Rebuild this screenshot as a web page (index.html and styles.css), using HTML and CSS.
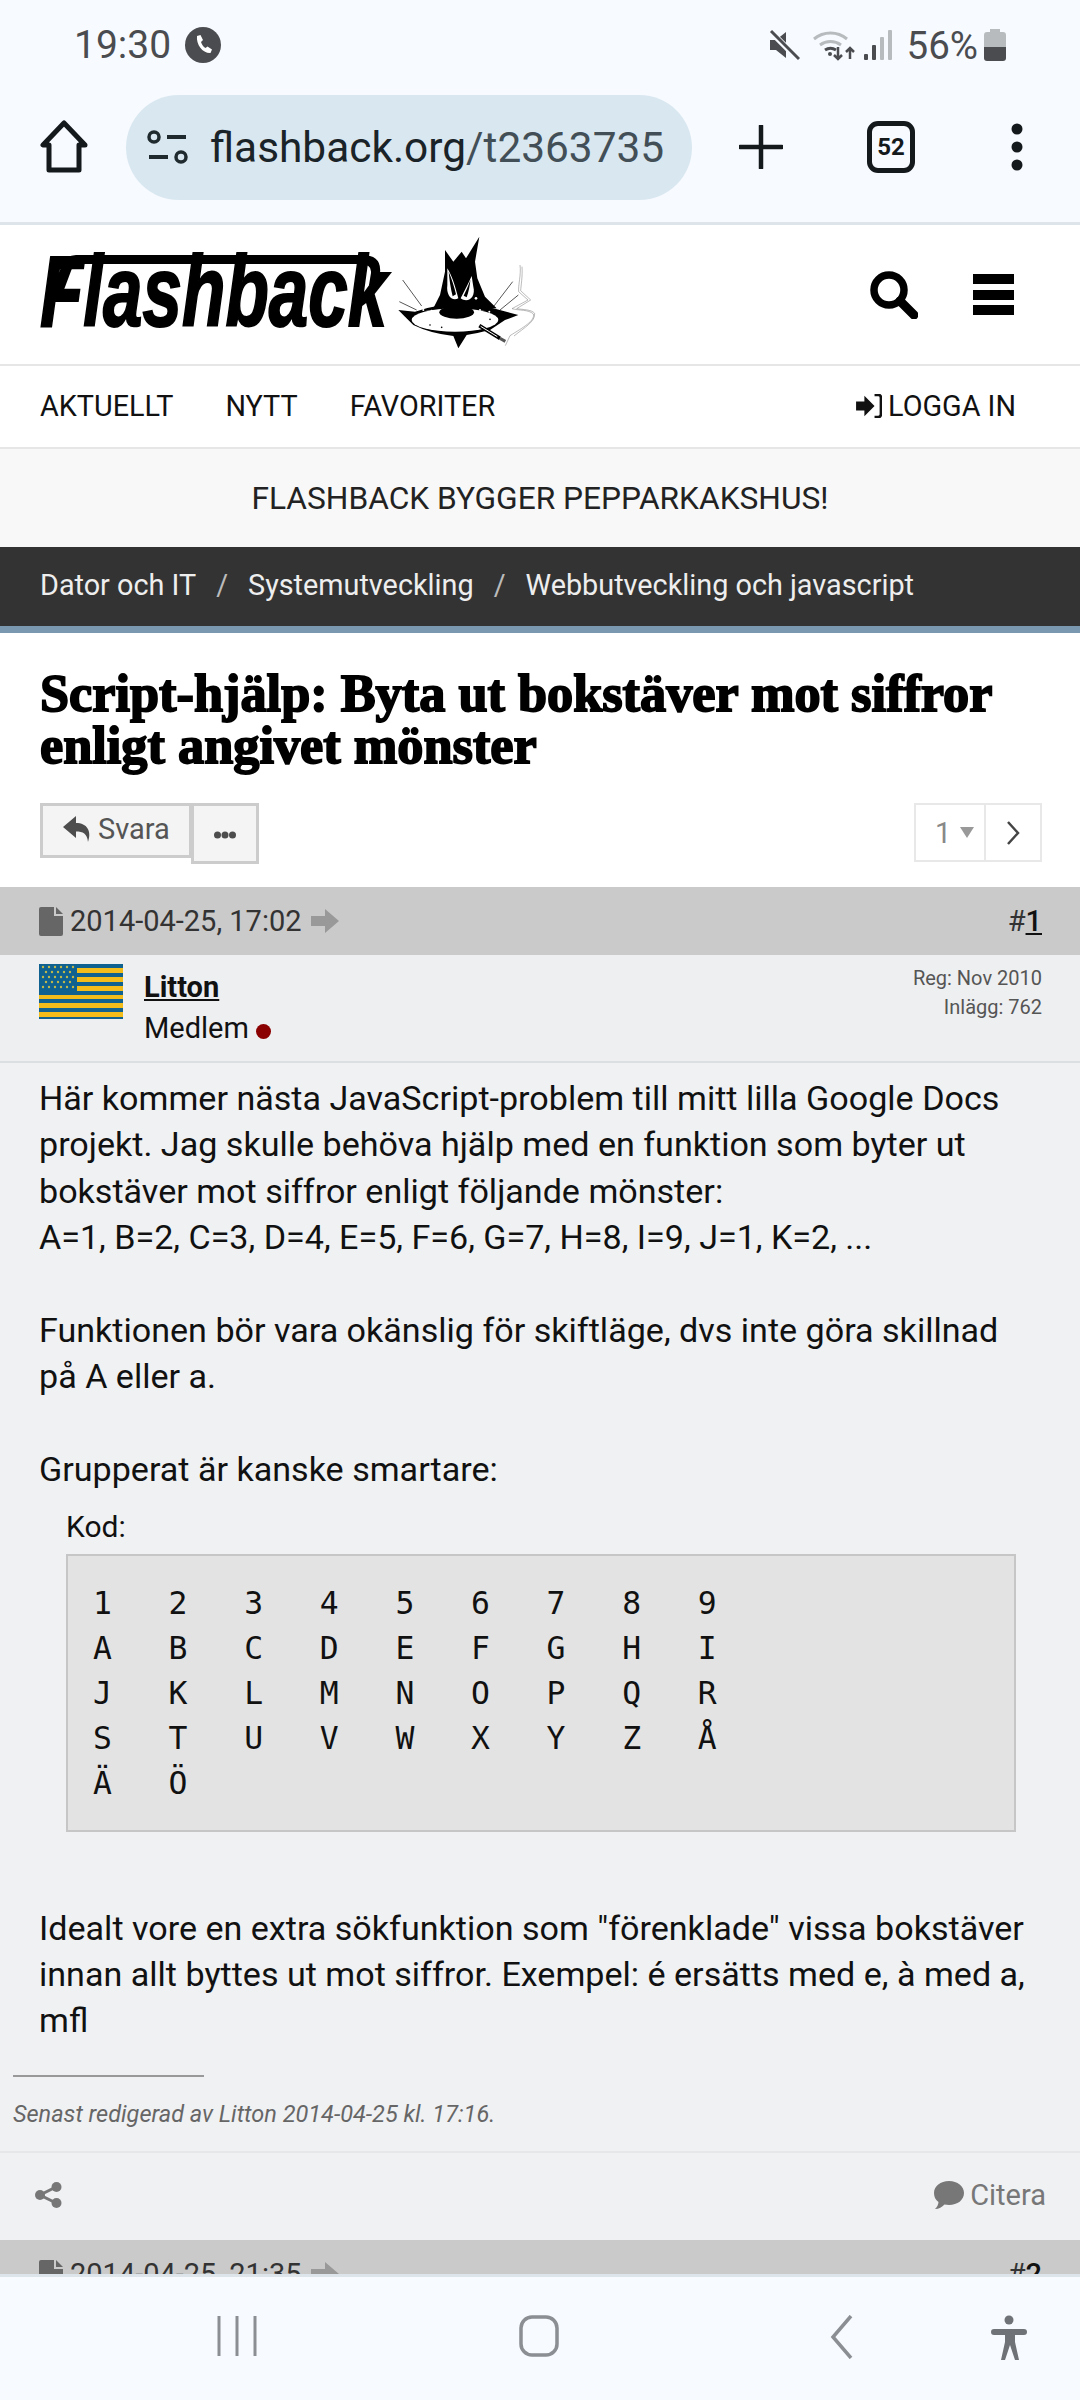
FILE: index.html
```html
<!DOCTYPE html>
<html lang="sv">
<head>
<meta charset="utf-8">
<title>Script-hjälp</title>
<link rel="stylesheet" href="styles.css">
</head>
<body>
<div class="screen">
  <header class="chrome">
    <div class="status">
      <div class="status-left">
        <span class="clock">19:30</span>
        <svg class="ic-call" viewBox="0 0 36 36"><circle cx="18" cy="18" r="18" fill="#4a4c4f"/><path d="M12 9l3.500-1 2.500 5-2 2c.8 2.600 2.300 4.700 4.500 6l2-1.500 4.500 3-1.500 3.500c-7.500.5-14.500-8-13.500-17z" fill="#fff"/></svg>
      </div>
      <div class="status-right">
        <svg class="ic-mute" viewBox="0 0 32 32"><path d="M2 11h6l10-8v26l-10-8H2z" fill="#4a4c4f"/><path d="M3 3l27 27" stroke="#f7faff" stroke-width="6"/><path d="M3 2l28 28" stroke="#4a4c4f" stroke-width="3"/></svg>
        <svg class="ic-wifi" viewBox="0 0 44 32"><path d="M2 10a26 26 0 0 1 33 0" fill="none" stroke="#b8bbbe" stroke-width="3"/><path d="M8 16a18 18 0 0 1 21 0" fill="none" stroke="#b8bbbe" stroke-width="3"/><path d="M13 21a10 10 0 0 1 11 0" fill="none" stroke="#4a4c4f" stroke-width="3"/><circle cx="18" cy="25" r="2" fill="#4a4c4f"/><path d="M26 18v12m-4-4l4 4 4-4M38 30V19m-4 4l4-4 4 4" fill="none" stroke="#4a4c4f" stroke-width="2.500"/></svg>
        <svg class="ic-signal" viewBox="0 0 30 32"><rect x="1" y="25" width="4" height="6" rx="1" fill="#4a4c4f"/><rect x="9" y="16" width="4" height="15" rx="1" fill="#4a4c4f"/><rect x="17" y="8" width="4" height="23" rx="1" fill="#b8bbbe"/><rect x="25" y="1" width="4" height="30" rx="1" fill="#b8bbbe"/></svg>
        <span class="batt-text">56%</span>
        <svg class="ic-batt" viewBox="0 0 22 32"><path d="M6 0h10v3h3a3 3 0 0 1 3 3v12H0V6a3 3 0 0 1 3-3h3z" fill="#b8bbbe"/><path d="M0 18h22v11a3 3 0 0 1-3 3H3a3 3 0 0 1-3-3z" fill="#4a4c4f"/></svg>
      </div>
    </div>
    <div class="toolbar">
      <svg class="ic-home" viewBox="0 0 48 54"><path d="M24 3L3 25h6v25h30V25h6z" fill="none" stroke="#14191c" stroke-width="5" stroke-linejoin="round"/></svg>
      <div class="omnibox">
        <svg class="ic-tune" viewBox="0 0 42 34"><circle cx="7" cy="7" r="5" fill="none" stroke="#1f2a2f" stroke-width="3.500"/><path d="M20 7h19M2 27h19" stroke="#1f2a2f" stroke-width="4"/><circle cx="34" cy="27" r="5" fill="none" stroke="#1f2a2f" stroke-width="3.500"/></svg>
        <span class="url"><span class="url-host">flashback.org</span>/t2363735</span>
      </div>
      <svg class="ic-plus" viewBox="0 0 44 44"><path d="M22 1v42M1 22h42" stroke="#14191c" stroke-width="4.500" stroke-linecap="round"/></svg>
      <div class="tabs">52</div>
      <svg class="ic-dots" viewBox="0 0 12 48"><circle cx="6" cy="6" r="5.500" fill="#14191c"/><circle cx="6" cy="24" r="5.500" fill="#14191c"/><circle cx="6" cy="42" r="5.500" fill="#14191c"/></svg>
    </div>
  </header>

  <main class="page">
    <div class="site-head">
      <div class="logo">
        <span class="logo-word">Flashback</span>
        <svg class="logo-bar" viewBox="0 0 350 92"><path d="M10 40L22 10Q26 0 36 0H322Q342 0 340 18L337 30H329L331 18Q332 9 320 9H40Q33 9 31 16L22 40z" fill="#000"/></svg>
        <svg class="logo-cat" viewBox="0 0 480 390">
          <path d="M165 60l25 35 25-30 13 20 40-65-13 75 7 50 23 55 35 35H130l20-40 15-70z" fill="#000"/>
          <path d="M38 150l57 78M28 215l52 25M368 155l-56 73M385 195l-55 45" stroke="#000" stroke-width="2" fill="none"/>
          <path d="M25 240l50 5q115-40 235-10l75 20-40 15-45 30q-40 10-70 15l-25 40-15-37q-70-8-120-33l-25-25z" fill="#000"/>
          <ellipse cx="195" cy="270" rx="130" ry="35" fill="#fff"/>
          <ellipse cx="200" cy="247" rx="52" ry="19" fill="#000"/>
          <path d="M172 115c13 20 23 50 33 90-20 10-37-10-33-40zM245 138c-10 22-20 42-33 67 23 17 46-5 38-35z" fill="#fff"/>
          <path d="M176 125c9 22 17 45 22 68l-10 6c-6-25-10-50-12-74zM241 150c-6 18-14 34-20 47l9 5c6-18 10-35 11-52z" fill="#000"/>
          <circle cx="100" cy="240" r="3" fill="#fff"/><circle cx="125" cy="243" r="3.500" fill="#fff"/><circle cx="270" cy="240" r="3" fill="#fff"/><circle cx="298" cy="245" r="3" fill="#fff"/><circle cx="258" cy="205" r="4" fill="#fff"/><circle cx="120" cy="285" r="2.500" fill="#000"/><circle cx="155" cy="292" r="2.500" fill="#000"/><circle cx="300" cy="268" r="2.500" fill="#000"/>
          <path d="M268 287l62 38" stroke="#000" stroke-width="11"/><path d="M272 289l50 31" stroke="#fff" stroke-width="3"/><path d="M330 325l16 9" stroke="#555" stroke-width="9"/>
          <path d="M390 105c4 30-6 60-4 80l28 25-48 26c20 6 50 2 64 16 6 20-30 40-70 65l-14 30M396 110c2 30-3 55-4 72l30 28-42 26c18 3 44 2 54 14 2 25-30 42-62 68" fill="none" stroke="#777" stroke-width="1.500"/>
        </svg>
      </div>
      <div class="head-icons">
        <svg class="ic-search" viewBox="0 0 48 48"><circle cx="19" cy="19" r="15" fill="none" stroke="#000" stroke-width="7.500"/><path d="M30 30l14 14" stroke="#000" stroke-width="9" stroke-linecap="round"/></svg>
        <div class="burger"><i></i><i></i><i></i></div>
      </div>
    </div>

    <nav class="nav">
      <div class="nav-links"><a>AKTUELLT</a><a>NYTT</a><a>FAVORITER</a></div>
      <a class="login"><svg class="ic-login" viewBox="0 0 28 26"><path d="M0 8h9V2l11 11-11 11v-6H0z" fill="#111"/><path d="M20 1h4a3 3 0 0 1 3 3v18a3 3 0 0 1-3 3h-4" fill="none" stroke="#111" stroke-width="3"/></svg>LOGGA IN</a>
    </nav>
    <div class="banner">FLASHBACK BYGGER PEPPARKAKSHUS!</div>
    <div class="crumbs"><a>Dator och IT</a><span class="sep">/</span><a>Systemutveckling</a><span class="sep">/</span><a>Webbutveckling och javascript</a></div>

    <section class="thread-top">
      <h1 class="title">Script-hjälp: Byta ut bokstäver mot siffror enligt angivet mönster</h1>
      <div class="actions">
        <div class="btn-group">
          <a class="btn btn-reply"><svg class="ic-reply" viewBox="0 0 29 26"><path d="M13 0L0 11l13 11v-6.500c7 0 11 2 12 10.500 4-11-1-19-12-19z" fill="#4d4d4d"/></svg>Svara</a>
          <a class="btn btn-more"><svg class="ic-more" viewBox="0 0 22 8"><circle cx="3.500" cy="4" r="3.500" fill="#4d4d4d"/><circle cx="11" cy="4" r="3.500" fill="#4d4d4d"/><circle cx="18.500" cy="4" r="3.500" fill="#4d4d4d"/></svg></a>
        </div>
        <div class="pager">
          <span class="pg-num">1<i class="caret"></i></span>
          <span class="pg-next"><svg class="ic-next" viewBox="0 0 16 26"><path d="M3 2l10 11L3 24" fill="none" stroke="#444" stroke-width="2.500"/></svg></span>
        </div>
      </div>
    </section>

    <article class="post">
      <div class="post-head">
        <div class="post-date">
          <svg class="ic-file" viewBox="0 0 24 29"><path d="M2 0h13v9h9v18a2 2 0 0 1-2 2H2a2 2 0 0 1-2-2V2a2 2 0 0 1 2-2z" fill="#666"/><path d="M17 0l7 7h-7z" fill="#666"/></svg>
          <span>2014-04-25, 17:02</span>
          <svg class="ic-arrow" viewBox="0 0 28 24"><path d="M0 7h14V0l14 12-14 12v-7H0z" fill="#999"/></svg>
        </div>
        <div class="post-no">#<a>1</a></div>
      </div>
      <div class="author">
        <svg class="flag" viewBox="0 0 84 55" shape-rendering="crispEdges">
          <rect width="84" height="55" fill="#0f6190"/>
          <g fill="#f2bd1a">
            <rect x="38" y="4" width="46" height="5"/><rect x="38" y="13" width="46" height="5"/><rect x="38" y="22" width="46" height="5"/>
            <rect y="31" width="84" height="4"/><rect y="39" width="84" height="5"/><rect y="48" width="84" height="5"/>
          </g>
          <g fill="#c2b94a" shape-rendering="auto">
            <circle cx="4" cy="3" r="1.200"/><circle cx="10" cy="3" r="1.200"/><circle cx="16" cy="3" r="1.200"/><circle cx="22" cy="3" r="1.200"/><circle cx="28" cy="3" r="1.200"/><circle cx="34" cy="3" r="1.200"/>
            <circle cx="7" cy="8" r="1.200"/><circle cx="13" cy="8" r="1.200"/><circle cx="19" cy="8" r="1.200"/><circle cx="25" cy="8" r="1.200"/><circle cx="31" cy="8" r="1.200"/>
            <circle cx="4" cy="13" r="1.200"/><circle cx="10" cy="13" r="1.200"/><circle cx="16" cy="13" r="1.200"/><circle cx="22" cy="13" r="1.200"/><circle cx="28" cy="13" r="1.200"/><circle cx="34" cy="13" r="1.200"/>
            <circle cx="7" cy="18" r="1.200"/><circle cx="13" cy="18" r="1.200"/><circle cx="19" cy="18" r="1.200"/><circle cx="25" cy="18" r="1.200"/><circle cx="31" cy="18" r="1.200"/>
            <circle cx="4" cy="23" r="1.200"/><circle cx="10" cy="23" r="1.200"/><circle cx="16" cy="23" r="1.200"/><circle cx="22" cy="23" r="1.200"/><circle cx="28" cy="23" r="1.200"/><circle cx="34" cy="23" r="1.200"/>
          </g>
        </svg>
        <div class="author-main">
          <a class="author-name">Litton</a>
          <div class="author-role">Medlem<i class="dot"></i></div>
        </div>
        <div class="author-meta"><div>Reg: Nov 2010</div><div>Inlägg: 762</div></div>
      </div>
      <div class="post-body">
        <p class="msg">Här kommer nästa JavaScript-problem till mitt lilla Google Docs<br>projekt. Jag skulle behöva hjälp med en funktion som byter ut<br>bokstäver mot siffror enligt följande mönster:<br>A=1, B=2, C=3, D=4, E=5, F=6, G=7, H=8, I=9, J=1, K=2, ...<br><br>Funktionen bör vara okänslig för skiftläge, dvs inte göra skillnad<br>på A eller a.<br><br>Grupperat är kanske smartare:</p>
        <div class="code-wrap">
          <div class="code-label">Kod:</div>
          <pre class="code">1   2   3   4   5   6   7   8   9
A   B   C   D   E   F   G   H   I
J   K   L   M   N   O   P   Q   R
S   T   U   V   W   X   Y   Z   Å
Ä   Ö</pre>
        </div>
        <p class="msg msg-end">Idealt vore en extra sökfunktion som "förenklade" vissa bokstäver<br>innan allt byttes ut mot siffror. Exempel: é ersätts med e, à med a,<br>mfl</p>
        <div class="edit-rule"></div>
        <div class="edit-note">Senast redigerad av Litton 2014-04-25 kl. 17:16.</div>
      </div>
      <div class="post-foot">
        <svg class="ic-share" viewBox="0 0 27 26"><circle cx="21.500" cy="5" r="5" fill="#777"/><circle cx="5" cy="13" r="5" fill="#777"/><circle cx="21.500" cy="21" r="5" fill="#777"/><path d="M21 5L5 13l16 8" fill="none" stroke="#777" stroke-width="3"/></svg>
        <a class="quote"><svg class="ic-quote" viewBox="0 0 32 30"><path d="M16 1c8.500 0 15 5 15 12s-6.500 12-15 12c-1.500 0-3-.2-4.500-.5C9 27 6 29 2 29c2-2 3.500-4.500 3.500-7C2.500 20 1 17 1 13 1 6 7.500 1 16 1z" fill="#777"/></svg>Citera</a>
      </div>
    </article>

    <article class="post">
      <div class="post-head">
        <div class="post-date">
          <svg class="ic-file" viewBox="0 0 24 29"><path d="M2 0h13v9h9v18a2 2 0 0 1-2 2H2a2 2 0 0 1-2-2V2a2 2 0 0 1 2-2z" fill="#666"/><path d="M17 0l7 7h-7z" fill="#666"/></svg>
          <span>2014-04-25, 21:35</span>
          <svg class="ic-arrow" viewBox="0 0 28 24"><path d="M0 7h14V0l14 12-14 12v-7H0z" fill="#999"/></svg>
        </div>
        <div class="post-no">#<a>2</a></div>
      </div>
    </article>
  </main>

  <footer class="sysnav">
    <svg class="ic-recents" viewBox="0 0 40 42"><path d="M2 1v40M20 1v40M38 1v40" stroke="#8b8f94" stroke-width="3"/></svg>
    <svg class="ic-homebtn" viewBox="0 0 40 42"><rect x="2" y="2" width="36" height="38" rx="11" fill="none" stroke="#8b8f94" stroke-width="3.500"/></svg>
    <svg class="ic-back" viewBox="0 0 24 44"><path d="M21 1L3 22l18 21" fill="none" stroke="#8b8f94" stroke-width="3.500"/></svg>
    <svg class="ic-access" viewBox="0 0 36 46"><circle cx="18" cy="5" r="4.500" fill="#6f7377"/><path d="M3 14h30a2.500 2.500 0 0 1 0 6h-9v7l4 18h-4l-5-15-5 15h-4l4-18v-7H3a2.500 2.500 0 0 1 0-6z" fill="#6f7377"/></svg>
  </footer>
</div>
</body>
</html>
```
FILE: styles.css
```css
* { box-sizing: border-box; }
html, body { margin: 0; padding: 0; }
body { font-family: Roboto, "Liberation Sans", sans-serif; color: #111; background: #fff; }
svg { display: block; flex: none; }
p { margin: 0; }
.screen { width: 1080px; height: 2400px; display: flex; flex-direction: column; overflow: hidden; }

/* browser chrome */
.chrome { height: 225px; background: #f7faff; border-bottom: 3px solid #dde5ea; flex: none; }
.status { height: 90px; padding: 0 74px 0 74px; display: flex; justify-content: space-between; align-items: center; color: #4a4c4f; }
.status-left { display: flex; align-items: center; gap: 14px; }
.clock { font-size: 39px; }
.ic-call { width: 36px; height: 36px; }
.status-right { display: flex; align-items: center; }
.ic-mute { width: 32px; height: 32px; margin-right: 12px; }
.ic-wifi { width: 44px; height: 32px; margin-right: 7px; }
.ic-signal { width: 30px; height: 32px; margin-right: 14px; }
.batt-text { font-size: 38.500px; margin-right: 6px; }
.ic-batt { width: 22px; height: 32px; }
.toolbar { height: 114px; display: flex; align-items: center; padding-left: 40px; }
.ic-home { width: 48px; height: 54px; margin-right: 38px; }
.omnibox { width: 566px; height: 105px; border-radius: 53px; background: #d9e7f0; display: flex; align-items: center; padding-left: 21px; margin-right: 47px; }
.ic-tune { width: 42px; height: 34px; margin-right: 21px; }
.url { font-size: 42.400px; color: #434f56; white-space: nowrap; }
.url-host { color: #1a2327; }
.ic-plus { width: 44px; height: 44px; margin-right: 84px; }
.tabs { width: 48px; height: 52px; border: 5px solid #14191c; border-radius: 11px; font-size: 24px; font-weight: 700; display: flex; align-items: center; justify-content: center; color: #14191c; margin-right: 96px; }
.ic-dots { width: 12px; height: 48px; }

/* page */
.page { flex: 1; min-height: 0; overflow: hidden; }
.site-head { height: 141px; display: flex; justify-content: space-between; align-items: center; padding: 0 66px 0 40px; border-bottom: 2px solid #e6e6e6; }
.logo { position: relative; width: 510px; height: 116px; }
.logo-word { position: absolute; left: 0; top: 4px; font: italic 700 100px/1 "Liberation Sans", sans-serif; color: #000; transform-origin: 0 0; transform: scaleX(.71); -webkit-text-stroke: 2px #000; white-space: nowrap; }
.logo-bar { position: absolute; left: 0; top: 18px; width: 350px; height: 92px; }
.logo-cat { position: absolute; left: 350px; top: -7px; width: 160px; height: 130px; }
.head-icons { display: flex; align-items: center; gap: 55px; }
.ic-search { width: 48px; height: 48px; }
.burger { width: 41px; height: 41px; display: flex; flex-direction: column; justify-content: space-between; }
.burger i { display: block; height: 10px; background: #000; }

.nav { height: 83px; display: flex; justify-content: space-between; align-items: center; padding: 0 64px 2px 40px; border-bottom: 2px solid #e6e6e6; font-size: 28.800px; color: #111; }
.nav-links { display: flex; gap: 52px; }
.login { display: flex; align-items: center; gap: 6px; }
.ic-login { width: 26px; height: 24px; }
.banner { height: 98px; background: #f8f8f8; display: flex; align-items: center; justify-content: center; font-size: 31.700px; color: #222; }
.crumbs { height: 86px; background: #333; border-bottom: 7px solid #7a98b0; display: flex; align-items: center; padding: 0 40px 4px; font-size: 28.800px; color: #eee; }
.sep { margin: 0 20px; color: #bbb; }

.thread-top { padding: 34px 38px 23px 40px; }
.title { margin: 0; font: 900 52.300px/52px "Liberation Serif", serif; color: #000; -webkit-text-stroke: 1.800px #000; }
.actions { display: flex; justify-content: space-between; align-items: flex-start; margin-top: 32px; }
.btn-group { display: flex; align-items: flex-start; }
.btn { display: flex; align-items: center; border: 3px solid #ccc; background: #f4f4f4; color: #555; font-size: 29px; }
.btn-reply { width: 152px; height: 55px; padding: 0 0 3px 20px; gap: 6px; }
.btn-more { width: 68px; height: 61px; justify-content: center; padding-top: 3px; margin-left: -1px; }
.ic-reply { width: 29px; height: 26px; }
.ic-more { width: 22px; height: 8px; }
.pager { display: flex; width: 128px; height: 59px; border: 2px solid #e8e8e8; color: #888; font-size: 29px; }
.pg-num { width: 70px; display: flex; align-items: center; padding-left: 19px; gap: 9px; border-right: 2px solid #e8e8e8; }
.caret { width: 0; height: 0; border-left: 7px solid transparent; border-right: 7px solid transparent; border-top: 11px solid #999; }
.pg-next { flex: 1; display: flex; align-items: center; justify-content: center; }
.ic-next { width: 16px; height: 26px; }

/* post */
.post { background: #f0f1f3; }
.post-head { height: 68px; background: #cacaca; display: flex; justify-content: space-between; align-items: center; padding: 0 38px 0 39px; font-size: 29px; color: #333; }
.post-date { display: flex; align-items: center; gap: 7px; }
.ic-file { width: 24px; height: 29px; }
.ic-arrow { width: 28px; height: 24px; margin-left: 2px; }
.post-no a { color: #111; font-weight: 500; text-decoration: underline; }
.author { height: 108px; background: #eeeff1; border-bottom: 2px solid #dcdfe2; display: flex; padding: 9px 38px 0 39px; }
.flag { width: 84px; height: 55px; }
.author-main { flex: 1; padding: 3px 0 0 21px; font-size: 29px; }
.author-name { font-weight: 700; text-decoration: underline; color: #111; display: block; line-height: 41px; }
.author-role { display: flex; align-items: center; line-height: 41px; color: #111; }
.dot { width: 15px; height: 15px; border-radius: 50%; background: #8b0000; margin: 6px 0 0 7px; }
.author-meta { text-align: right; font-size: 20px; line-height: 29px; color: #555; }
.post-body { padding-top: 12px; height: 1088px; }
.msg { padding: 0 0 0 39px; font-size: 34.100px; line-height: 46.400px; color: #111; }
.code-wrap { padding: 12px 64px 0 66px; }
.code-label { font-size: 30px; line-height: 44px; color: #111; }
.code { margin: 5px 0 0; height: 278px; background: #e3e3e3; border: 2px solid #c6c6c6; padding: 25px 25px; font: 31.400px/45px "DejaVu Sans Mono", monospace; color: #111; }
.msg-end { margin-top: 73px; }
.edit-rule { width: 191px; margin: 31px 0 0 13px; border-top: 2px solid #999; }
.edit-note { margin: 23px 0 0 13px; font-size: 23.500px; font-style: italic; color: #666; }
.post-foot { height: 89px; border-top: 2px solid #e6e7e8; display: flex; justify-content: space-between; align-items: center; padding: 0 34px 3px 35px; }
.ic-share { width: 27px; height: 26px; }
.quote { display: flex; align-items: center; gap: 5px; font-size: 29px; color: #777; }
.ic-quote { width: 32px; height: 30px; }

/* system nav */
.sysnav { height: 126px; flex: none; background: #f7faff; border-top: 3px solid #dde5ea; display: flex; align-items: flex-start; padding: 38px 0 0 217px; }
.ic-recents { width: 40px; height: 42px; }
.ic-homebtn { width: 40px; height: 42px; margin-left: 262px; }
.ic-back { width: 24px; height: 44px; margin-left: 271px; }
.ic-access { width: 36px; height: 46px; margin-left: 137px; }
```
